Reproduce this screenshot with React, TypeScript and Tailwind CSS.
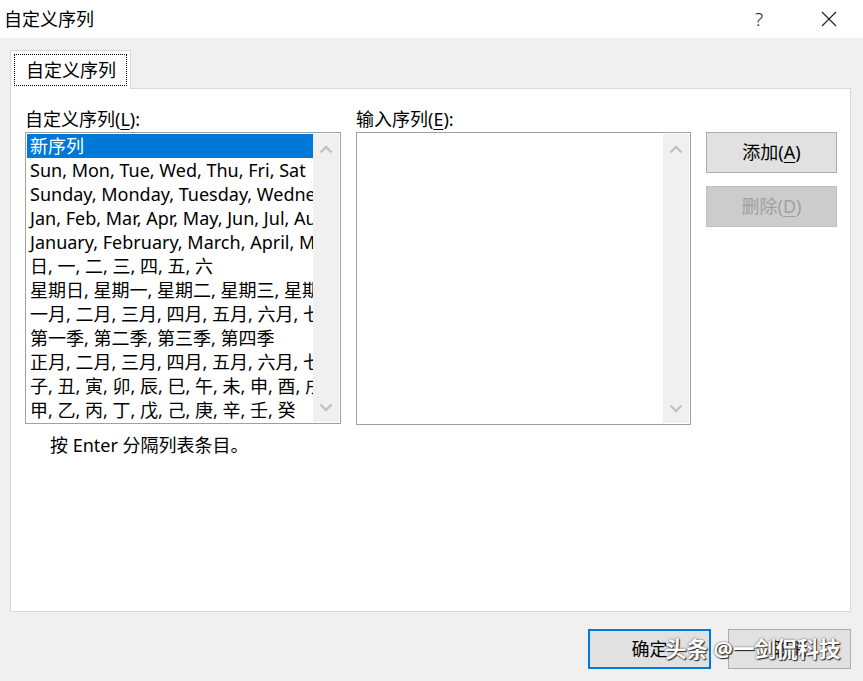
const font = "font-['Noto_Sans','Noto_Sans_CJK_SC',sans-serif]";

const seriesItems = [
  "新序列",
  "Sun, Mon, Tue, Wed, Thu, Fri, Sat",
  "Sunday, Monday, Tuesday, Wednesday, Thursday, Friday, Saturday",
  "Jan, Feb, Mar, Apr, May, Jun, Jul, Aug, Sep, Oct, Nov, Dec",
  "January, February, March, April, May, June, July, August",
  "日, 一, 二, 三, 四, 五, 六",
  "星期日, 星期一, 星期二, 星期三, 星期四, 星期五, 星期六",
  "一月, 二月, 三月, 四月, 五月, 六月, 七月, 八月",
  "第一季, 第二季, 第三季, 第四季",
  "正月, 二月, 三月, 四月, 五月, 六月, 七月, 八月",
  "子, 丑, 寅, 卯, 辰, 巳, 午, 未, 申, 酉, 戌, 亥",
  "甲, 乙, 丙, 丁, 戊, 己, 庚, 辛, 壬, 癸",
];

function Chevron({ up }: { up?: boolean }) {
  return (
    <svg viewBox="0 0 14 9" className="h-[9px] w-[14px]" aria-hidden>
      <polyline
        points={up ? "1.5,7.5 7,2 12.5,7.5" : "1.5,1.5 7,7 12.5,1.5"}
        fill="none"
        stroke="#c2c2c2"
        strokeWidth="2.4"
      />
    </svg>
  );
}

function ScrollBar() {
  return (
    <div className="flex w-[26px] shrink-0 flex-col items-center justify-between bg-[#f0f0f0] pt-[11px] pb-[10px]">
      <Chevron up />
      <Chevron />
    </div>
  );
}

function Label({ text, hot }: { text: string; hot: string }) {
  return (
    <div className="h-[24px] text-[18px] leading-[22px] text-black">
      {text}(<span className="underline underline-offset-[3px]">{hot}</span>):
    </div>
  );
}

export default function App() {
  return (
    <div className={`${font} relative flex h-[681px] w-[863px] flex-col overflow-hidden bg-[#f0f0f0] text-black`}>
      {/* title bar */}
      <div className="flex h-[38px] shrink-0 items-center bg-white">
        <span className="pl-[4px] text-[18px] leading-[24px]">自定义序列</span>
        <span className="ml-auto mr-[58px] text-[19px] font-light leading-[24px] text-[#222]">?</span>
        <svg viewBox="0 0 16 16" className="mr-[26px] h-[16px] w-[16px]" aria-hidden>
          <path d="M1 1 15 15M15 1 1 15" stroke="#222" strokeWidth="1.2" fill="none" />
        </svg>
      </div>

      {/* body */}
      <div className="flex flex-1 flex-col pl-[10px] pt-[12px]">
        <div className="flex">
          <div className="relative -mb-px h-[39px] w-[121px] border border-b-0 border-[#d9d9d9] bg-white p-[3px]">
            <div className="h-[32px] border border-dotted border-black pl-[11px] text-[18px] leading-[30px]">
              自定义序列
            </div>
          </div>
        </div>

        <div className="flex h-[524px] w-[841px] flex-col border border-[#d9d9d9] bg-white pl-[14px] pt-[19px]">
          <div className="flex gap-[15px]">
            <div className="flex w-[316px] flex-col">
              <Label text="自定义序列" hot="L" />
              <div className="flex h-[292px] border border-[#a0a0a0] p-px">
                <div className="flex flex-1 flex-col overflow-hidden">
                  {seriesItems.map((item, i) => (
                    <div
                      key={item}
                      className={`h-[24px] shrink-0 whitespace-nowrap pl-[3px] text-[18px] leading-[24px] ${
                        i === 0 ? "bg-[#0078d7] text-white" : "text-black"
                      }`}
                    >
                      {item}
                    </div>
                  ))}
                </div>
                <ScrollBar />
              </div>
              <div className="pl-[25px] pt-[9px] text-[18px] leading-[24px]">按 Enter 分隔列表条目。</div>
            </div>

            <div className="flex w-[335px] flex-col">
              <Label text="输入序列" hot="E" />
              <div className="flex h-[293px] justify-end border border-[#a0a0a0] p-px">
                <ScrollBar />
              </div>
            </div>

            <div className="flex w-[131px] flex-col gap-[13px] pt-[24px]">
              <div className="flex h-[41px] items-center justify-center border border-[#adadad] bg-[#e1e1e1] text-[18px]">
                <span>
                  添加(<span className="underline underline-offset-[3px]">A</span>)
                </span>
              </div>
              <div className="flex h-[41px] items-center justify-center border border-[#bfbfbf] bg-[#cccccc] text-[18px] text-[#a0a0a0]">
                <span>
                  删除(<span className="underline underline-offset-[3px]">D</span>)
                </span>
              </div>
            </div>
          </div>
        </div>

        {/* footer */}
        <div className="flex justify-end gap-[17px] pr-[12px] pt-[17px]">
          <div className="flex h-[40px] w-[123px] items-center justify-center border-2 border-[#0078d7] bg-[#e1e1e1] text-[18px]">
            确定
          </div>
          <div className="flex h-[40px] w-[123px] items-center justify-center border border-[#adadad] bg-[#e1e1e1] text-[18px]">
            取消
          </div>
        </div>
      </div>

      {/* watermark */}
      <div className="absolute left-[665px] top-[634px] whitespace-nowrap text-[21.5px] font-bold leading-[30px] text-white [text-shadow:1px_1px_1px_#222,0_0_2px_#444]">
        头条 @一剑侃科技
      </div>
    </div>
  );
}
